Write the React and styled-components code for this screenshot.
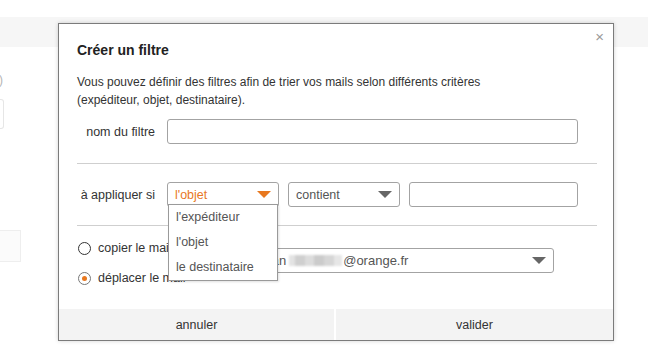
import React from 'react'
import styled, { createGlobalStyle } from 'styled-components'

const Global = createGlobalStyle`
  html, body { margin: 0; padding: 0; background: #fff; }
  body { font-family: Arial, "Liberation Sans", sans-serif; font-size: 12px; color: #333; }
`

const orange = '#e8781f'

const Page = styled.div`
  position: relative;
  width: 648px;
  height: 359px;
  overflow: hidden;
`

const TopBand = styled.div`
  margin-top: 17px;
  height: 30px;
  background: #f6f6f6;
`

const Behind = styled.div`
  display: flex;
  flex-direction: column;
  align-items: flex-start;
`

const Paren = styled.span`
  margin-top: 26px;
  margin-left: -1px;
  line-height: 14px;
  color: #b5b5b5;
`

const CutField = styled.div`
  margin-top: 12px;
  width: 3px;
  height: 28px;
  border: 1px solid #e6e6e6;
  border-left: none;
  border-radius: 0 3px 3px 0;
`

const CutButton = styled.div`
  margin-top: 101px;
  width: 20px;
  height: 30px;
  background: #fbfbfb;
  border: 1px solid #eee;
  border-left: none;
`

const Modal = styled.div`
  position: absolute;
  left: 58px;
  top: 23px;
  width: 554px;
  height: 316px;
  border: 1px solid #7b7b7b;
  background: #fff;
  box-shadow: 0 0 4px rgba(0, 0, 0, 0.18);
  display: flex;
  flex-direction: column;
`

const Close = styled.span`
  position: absolute;
  right: 9px;
  top: 5px;
  font-size: 15px;
  color: #9a9a9a;
  line-height: 16px;
`

const Body = styled.div`
  flex: 1;
  padding: 16px 16px 0 18px;
`

const Title = styled.h2`
  margin: 0;
  font-size: 14px;
  font-weight: bold;
  line-height: 20px;
  color: #222;
`

const Intro = styled.p`
  margin: 13px 0 0;
  line-height: 18px;
  color: #333;
`

const Row = styled.div`
  display: flex;
  align-items: center;
  gap: 9px;
  margin-top: ${p => p.$top}px;
`

const Label = styled.span`
  width: 78px;
  margin-right: 3px;
  text-align: right;
  color: #333;
  font-size: 12.5px;
`

const Field = styled.div`
  box-sizing: border-box;
  width: ${p => p.$w}px;
  height: 25px;
  border: 1px solid #a3a3a3;
  border-radius: 3px;
  background: #fff;
`

const Select = styled.div`
  position: relative;
  box-sizing: border-box;
  width: ${p => p.$w}px;
  height: 25px;
  border: 1px solid #a3a3a3;
  border-radius: 3px;
  background: #fff;
  display: flex;
  align-items: center;
  padding: 0 7px;
  color: ${p => (p.$active ? orange : '#555')};
  font-size: 12.5px;
  white-space: nowrap;
`

const Arrow = styled.span`
  margin-left: auto;
  width: 0;
  height: 0;
  border-left: 7px solid transparent;
  border-right: 7px solid transparent;
  border-top: 7px solid ${p => (p.$active ? orange : '#666')};
`

const Menu = styled.ul`
  position: absolute;
  left: 0;
  top: 21px;
  z-index: 2;
  box-sizing: border-box;
  width: 110px;
  margin: 0;
  padding: 0;
  list-style: none;
  background: #fff;
  border: 1px solid #9a9a9a;
  box-shadow: 1px 1px 2px rgba(0, 0, 0, 0.12);
`

const MenuItem = styled.li`
  height: 25px;
  line-height: 25px;
  padding-left: 7px;
  color: #555;
  font-size: 12.5px;
`

const Rule = styled.hr`
  margin: ${p => p.$top}px 0 0;
  border: none;
  border-top: 1px solid #cfcfcf;
`

const Actions = styled.div`
  display: grid;
  grid-template-columns: auto auto;
  justify-content: space-between;
  align-items: center;
  margin-top: 13px;
`

const Options = styled.div`
  display: flex;
  flex-direction: column;
  gap: 12px;
`

const Option = styled.label`
  display: flex;
  align-items: center;
  gap: 7px;
  height: 18px;
  color: #333;
  font-size: 12.5px;
`

const Radio = styled.span`
  box-sizing: border-box;
  width: 13px;
  height: 13px;
  margin-left: 1px;
  border-radius: 50%;
  border: 1.5px solid ${p => (p.$on ? '#777' : '#333')};
  display: flex;
  align-items: center;
  justify-content: center;
  &::after {
    content: '';
    width: 5px;
    height: 5px;
    border-radius: 50%;
    background: ${p => (p.$on ? orange : 'transparent')};
  }
`

const Folder = styled(Select)`
  margin-bottom: 5px;
  margin-right: 43px;
  color: #555;
  font-size: 13px;
`

const Blur = styled.span`
  display: inline-block;
  width: 53px;
  height: 11px;
  margin: 0 1px 0 3px;
  background: linear-gradient(90deg, #e3e3e3 0 12%, #cfcfcf 12% 30%, #dcdcdc 30% 48%, #cbcbcb 48% 66%, #d6d6d6 66% 84%, #e6e6e6 84%);
  filter: blur(1px);
`

const Footer = styled.div`
  display: grid;
  grid-template-columns: 275px 1fr;
  gap: 2px;
  height: 31px;
`

const FootButton = styled.button`
  border: none;
  margin: 0;
  background: #f3f3f3;
  font-family: inherit;
  font-size: 12.5px;
  color: #333;
`

export default function App() {
  return (
    <Page>
      <Global />
      <TopBand />
      <Behind>
        <Paren>)</Paren>
        <CutField />
        <CutButton />
      </Behind>
      <Modal>
        <Close>×</Close>
        <Body>
          <Title>Créer un filtre</Title>
          <Intro>
            Vous pouvez définir des filtres afin de trier vos mails selon différents critères
            <br />
            (expéditeur, objet, destinataire).
          </Intro>
          <Row $top={10}>
            <Label>nom du filtre</Label>
            <Field $w={411} />
          </Row>
          <Rule $top={19} />
          <Row $top={18}>
            <Label>à appliquer si</Label>
            <Select $w={112} $active>
              l'objet
              <Arrow $active />
              <Menu>
                <MenuItem>l'expéditeur</MenuItem>
                <MenuItem>l'objet</MenuItem>
                <MenuItem>le destinataire</MenuItem>
              </Menu>
            </Select>
            <Select $w={112}>
              contient
              <Arrow />
            </Select>
            <Field $w={169} />
          </Row>
          <Rule $top={18} />
          <Actions>
            <Options>
              <Option>
                <Radio />
                copier le mail
              </Option>
              <Option>
                <Radio $on />
                déplacer le mail
              </Option>
            </Options>
            <Folder $w={351}>
              boîte de jean
              <Blur />
              @orange.fr
              <Arrow />
            </Folder>
          </Actions>
        </Body>
        <Footer>
          <FootButton>annuler</FootButton>
          <FootButton>valider</FootButton>
        </Footer>
      </Modal>
    </Page>
  )
}
